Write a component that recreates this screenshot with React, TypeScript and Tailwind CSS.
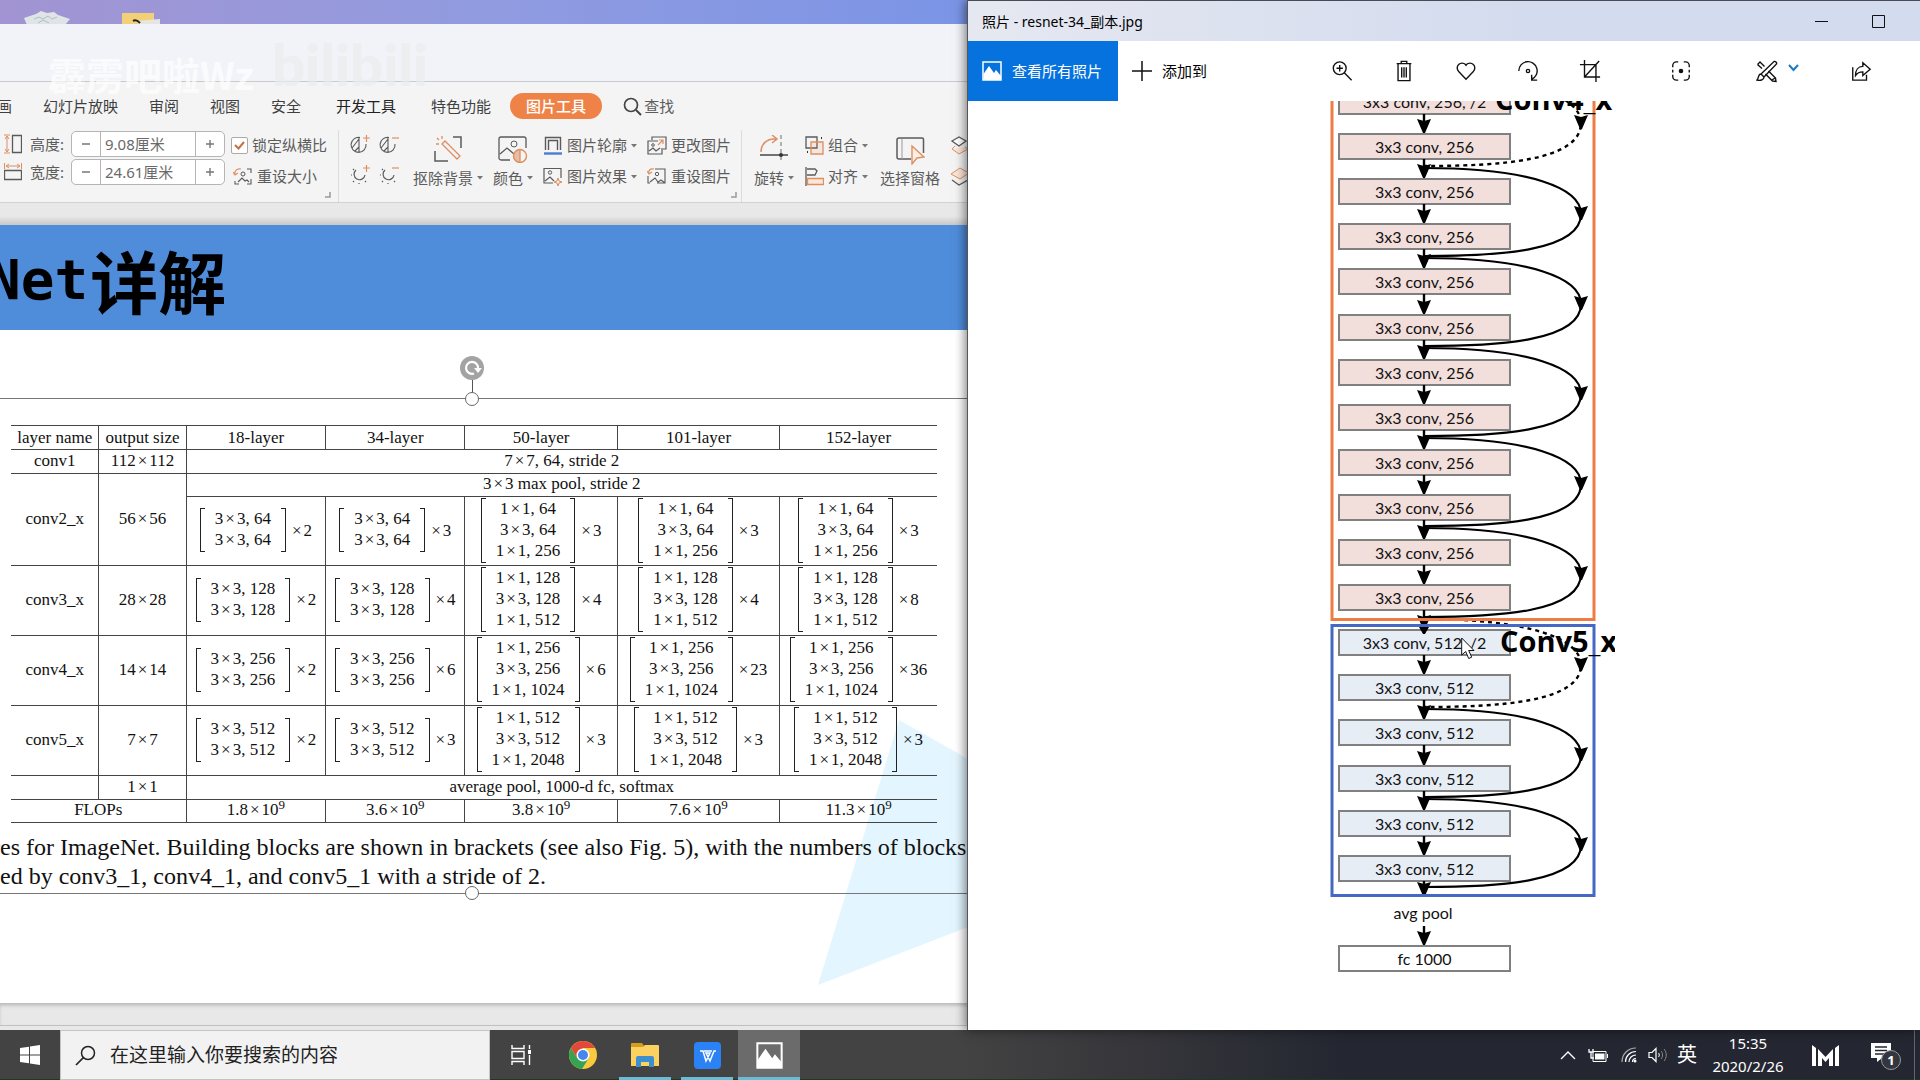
import React from "react";

const UI = "font-['Noto_Sans','Noto_Sans_CJK_SC',sans-serif]";

/* ---------- shared bits ---------- */

function Svg({ w, h, vb, className = "", children }: { w: number; h: number; vb?: string; className?: string; children: React.ReactNode }) {
  return (
    <svg width={w} height={h} viewBox={vb ?? `0 0 ${w} ${h}`} fill="none" className={`shrink-0 ${className}`} aria-hidden="true">
      {children}
    </svg>
  );
}

const Caret = () => (
  <Svg w={6} h={4} className="ml-1">
    <path d="M0 0h6L3 3.5z" fill="#777" />
  </Svg>
);

const DARK = "#5a5a5a";
const ORG = "#dd8f62";

/* ---------- presentation window ---------- */

function Stepper({ label, value, icon }: { label: string; value: string; icon: React.ReactNode }) {
  return (
    <div className="flex h-[26px] items-center">
      <span className="flex w-[18px] justify-center">{icon}</span>
      <label htmlFor={label} className="ml-2 w-[41px]">{label}:</label>
      <div className="flex h-[26px] w-[154px] overflow-hidden rounded-[5px] border border-[#b5b5b5] bg-white">
        <button aria-label={`减小${label}`} className="grid w-7 place-items-center">
          <Svg w={8} h={8}><path d="M0 4h8" stroke="#777" strokeWidth="1.4" /></Svg>
        </button>
        <input id={label} defaultValue={value} className="w-0 flex-1 border-x border-[#b5b5b5] px-1 text-[15px] text-[#6a6a6a] outline-none" />
        <button aria-label={`增大${label}`} className="grid w-7 place-items-center">
          <Svg w={8} h={8}><path d="M0 4h8M4 0v8" stroke="#777" strokeWidth="1.4" /></Svg>
        </button>
      </div>
    </div>
  );
}

function Small({ icon, text, caret }: { icon: React.ReactNode; text: string; caret?: boolean }) {
  return (
    <button className="flex h-[31px] items-center whitespace-nowrap">
      <span className="mr-1 flex w-5 justify-center">{icon}</span>
      {text}
      {caret && <Caret />}
    </button>
  );
}

function Big({ icon, text, caret, className = "" }: { icon: React.ReactNode; text: string; caret?: boolean; className?: string }) {
  return (
    <button className={`flex flex-col items-center whitespace-nowrap pt-1 ${className}`}>
      <span className="flex h-[30px] items-center">{icon}</span>
      <span className="flex h-[28px] items-center">
        {text}
        {caret && <Caret />}
      </span>
    </button>
  );
}

const Corner = () => (
  <Svg w={6} h={6} className="self-end"><path d="M5 0v5H0" stroke="#999" strokeWidth="1.5" /></Svg>
);

const Adjust = ({ round, plus }: { round?: boolean; plus?: boolean }) => (
  <button aria-label={`${round ? "亮度" : "对比度"}${plus ? "增加" : "减少"}`} className="grid h-[30px] w-[29px] place-items-center">
    <Svg w={20} h={20}>
      {round ? (
        <path d="M6 5a5.500 5.500 0 1 0 9 5M3 4l1 1M1 10h1M3 17l1-1M9 19v-1M15 16l1 1" stroke={DARK} strokeWidth="1.2" />
      ) : (
        <path d="M10 2.500a7.500 7.500 0 1 0 6 6.500M9 3v14.500M9 4l-7 9M9 12l-4 4" stroke={DARK} strokeWidth="1.1" />
      )}
      <path d={plus ? "M13 3h7M16.500 0v7" : "M13 3h7"} stroke={ORG} strokeWidth="1.2" />
    </Svg>
  </button>
);

const ResetPicture = () => (
  <Svg w={20} h={19}>
    <path d="M8 2h10v14h-8M1 9v7h2M3 15l5-4 3 4 3-2 4 3" stroke={DARK} strokeWidth="1.1" />
    <circle cx="10" cy="7" r="1.700" stroke={DARK} />
    <path d="M2 7C1 4 3 1 7 2M0 4l2 3 3-2" stroke={ORG} strokeWidth="1.2" />
  </Svg>
);

const ResetSize = () => (
  <Svg w={20} h={19}>
    <path d="M14 2h4v4M18 12v5h-4M6 17H2v-3M5 15l4-4 3 3 2-1 2 2" stroke={DARK} strokeWidth="1.1" />
    <circle cx="10" cy="7" r="2" stroke={DARK} />
    <path d="M2 8C1 4 4 1 8 2M0 5l2 3 3-2" stroke={ORG} strokeWidth="1.2" />
  </Svg>
);

function Ribbon() {
  return (
    <div className="flex shrink-0 flex-col overflow-hidden border-b border-[#d2d2d2] bg-[#f4f4f4] text-[15px] text-[#5c5c5c]">
      <nav className="flex h-12 items-center gap-[31px] whitespace-nowrap text-[#3f3f3f]">
        <button className="-ml-[3px]">画</button>
        <button>幻灯片放映</button>
        <button>审阅</button>
        <button>视图</button>
        <button>安全</button>
        <button className="px-1 text-[#222]">开发工具</button>
        <button>特色功能</button>
        <button className="-ml-3 h-[26px] rounded-full bg-[#ef8247] px-4 font-medium text-white">图片工具</button>
        <button className="-ml-2.5 flex items-center gap-0.5 text-[#5c5c5c]">
          <Svg w={19} h={19}><circle cx="8" cy="8" r="6.500" stroke="#444" strokeWidth="1.7" /><path d="M13 13l5 5" stroke="#444" strokeWidth="2" /></Svg>
          查找
        </button>
      </nav>
      <div className="flex h-[72px] whitespace-nowrap">
        <div className="flex w-[339px] shrink-0 border-r border-[#dcdcdc] pl-1">
          <div className="flex flex-col gap-0.5 pt-px">
            <Stepper label="高度" value="9.08厘米" icon={<Svg w={18} h={20}><path d="M8.500 1.500h9v17h-9z" stroke={DARK} strokeWidth="1.3" /><path d="M0 1h6M0 19h6M3 2v16M1 5l2-3 2 3M1 15l2 3 2-3" stroke={ORG} /></Svg>} />
            <Stepper label="宽度" value="24.61厘米" icon={<Svg w={18} h={18}><path d="M.5 7.500h17v9H.5z" stroke={DARK} strokeWidth="1.3" /><path d="M.5 0v6M17.500 0v6M2 3h14M5 1L2 3l3 2M13 1l3 2-3 2" stroke={ORG} /></Svg>} />
          </div>
          <div className="ml-1.5 flex flex-col">
            <label className="flex h-[31px] items-center gap-1">
              <span className="relative grid size-[17px] place-items-center">
                <input type="checkbox" defaultChecked className="peer size-[17px] appearance-none rounded-[2px] border border-[#b0a8a4] bg-white" />
                <Svg w={11} h={9} className="pointer-events-none absolute hidden peer-checked:block"><path d="M1 4l3.500 3.500L10 1" stroke="#c4703f" strokeWidth="2" /></Svg>
              </span>
              锁定纵横比
            </label>
            <span className="ml-0.5"><Small text="重设大小" icon={<ResetSize />} /></span>
          </div>
          <div className="-ml-0.5 flex pb-1"><Corner /></div>
        </div>
        <div className="grid shrink-0 grid-cols-2 content-start self-start pl-1.5">
          <Adjust plus /><Adjust /><Adjust round plus /><Adjust round />
        </div>
        <Big className="ml-2.5" text="抠除背景" caret icon={
          <Svg w={28} h={26}><path d="M19 1h8v11M1 15v10h13" stroke={DARK} strokeWidth="1.5" /><path d="M9 7l2-2 15 15-3 3L8 8zM2 8h3M3 2l2 2M8 0v3" stroke={ORG} strokeWidth="1.3" /></Svg>
        } />
        <Big className="ml-2.5" text="颜色" caret icon={
          <Svg w={30} h={27}><path d="M12 24H3a2 2 0 0 1-2-2V3a2 2 0 0 1 2-2h23a2 2 0 0 1 2 2v9M2 18l7-6 7 6" stroke={DARK} strokeWidth="1.3" /><circle cx="16" cy="8" r="3" stroke={DARK} /><circle cx="22" cy="20" r="6.500" stroke={ORG} strokeWidth="1.4" /><path d="M22 13.500a6.500 6.500 0 0 0 0 13z" fill={ORG} opacity=".55" /><path d="M22 13v14" stroke={ORG} strokeWidth="1.3" /></Svg>
        } />
        <div className="ml-2.5 flex flex-col">
          <Small text="图片轮廓" caret icon={<Svg w={18} h={19}><path d="M1.500 14V1.500h15V14M4.500 14V4.500h9V14" stroke={DARK} strokeWidth="1.4" /><path d="M0 17.500h18" stroke="#4a7fd0" strokeWidth="2.4" /></Svg>} />
          <Small text="图片效果" caret icon={<Svg w={20} h={19}><path d="M10 16H1V1.500h17V11M2 14l5-4 4 4" stroke={DARK} strokeWidth="1.2" /><circle cx="7" cy="5.500" r="1.700" stroke={DARK} /><path d="M15 11l1 3 3 1-3 1-1 3-1-3-3-1 3-1z" stroke={ORG} /></Svg>} />
        </div>
        <div className="ml-2.5 flex flex-col">
          <Small text="更改图片" icon={<Svg w={20} h={19}><path d="M5 4V1h14v12h-3M11 5H1v13h14v-6M2 15l4-3 3 3 4-3" stroke={DARK} strokeWidth="1.2" /><circle cx="6" cy="9" r="1.300" stroke={DARK} /><path d="M11 9l5-5M12 4h4v4" stroke={ORG} strokeWidth="1.2" /></Svg>} />
          <Small text="重设图片" icon={<ResetPicture />} />
        </div>
        <div className="flex shrink-0 border-r border-[#dcdcdc] pb-1 pr-1"><Corner /></div>
        <Big className="ml-3" text="旋转" caret icon={
          <Svg w={28} h={28}><path d="M0 20h28" stroke={DARK} strokeWidth="1.7" /><path d="M21 0v28" stroke="#999" strokeWidth="1.5" strokeDasharray="4 3" /><circle cx="21" cy="20" r="2" fill="#333" /><path d="M1 17C1 9 7 3 16 4M12 0l5 4-5 4" stroke={ORG} strokeWidth="1.5" /></Svg>
        } />
        <div className="ml-2.5 flex flex-col">
          <Small text="组合" caret icon={<Svg w={19} h={19}><path d="M1 1h11v11H1z" stroke={DARK} strokeWidth="1.3" /><path d="M6 6h12v12H6z" stroke={ORG} strokeWidth="1.3" fill="#ef8247" fillOpacity=".12" /><path d="M16 2h1M2 16h1" stroke="#333" strokeWidth="2" /></Svg>} />
          <Small text="对齐" caret icon={<Svg w={19} h={19}><path d="M1 0v19M2 2h8l2 2-2 4H2" stroke={DARK} strokeWidth="1.3" /><path d="M2.500 11.500h16v6h-16z" stroke={ORG} strokeWidth="1.3" fill="#fbe6d8" /></Svg>} />
        </div>
        <Big className="ml-3" text="选择窗格" icon={
          <Svg w={29} h={28} className="mt-1"><path d="M15 22H3a2 2 0 0 1-2-2V3a2 2 0 0 1 2-2h23a1.500 1.500 0 0 1 1.500 1.500V16" stroke={DARK} strokeWidth="1.5" /><path d="M6 2v20" stroke="#999" /><path d="M16 9l12 11-7 1-5 6z" stroke={ORG} strokeWidth="1.4" fill="#fdeee4" /></Svg>
        } />
        <div className="ml-2.5 flex flex-col">
          <Small text="" icon={<Svg w={20} h={19}><path d="M2 13l7 5 9-5-3-2M2 13l3-3" stroke={ORG} fill="#fbe6d8" /><path d="M2 5l7-4 7 4-7 5z" stroke={DARK} strokeWidth="1.3" fill="#fff" /></Svg>} />
          <Small text="" icon={<Svg w={20} h={19}><path d="M2 13l7 5 9-5" stroke={DARK} strokeWidth="1.3" /><path d="M1 7l9-6 9 5-9 6z" stroke={ORG} fill="#fbe6d8" /></Svg>} />
        </div>
      </div>
    </div>
  );
}

/* Text with breathing room round each multiplication sign. */
function T({ s }: { s: string }) {
  return (
    <>
      {s.split("×").map((part, i) => (
        <React.Fragment key={i}>
          {i > 0 && <span className="px-0.5">×</span>}
          {part}
        </React.Fragment>
      ))}
    </>
  );
}

function Matrix({ rows, times }: { rows: string[]; times: number }) {
  return (
    <div className="flex items-center justify-center leading-[21px]">
      <div className="w-[5px] self-stretch border-y border-l border-[#222]" />
      <div className="px-2.5 pb-0.5 text-center">
        {rows.map((r, i) => <div key={i}><T s={r} /></div>)}
      </div>
      <div className="w-[5px] self-stretch border-y border-r border-[#222]" />
      <span className="ml-1"><T s={`×${times}`} /></span>
    </div>
  );
}

const BLOCKS = [
  { name: "conv2_x", size: "56×56", c: 64, out: 256, n: [2, 3, 3, 3, 3] },
  { name: "conv3_x", size: "28×28", c: 128, out: 512, n: [2, 4, 4, 4, 8] },
  { name: "conv4_x", size: "14×14", c: 256, out: 1024, n: [2, 6, 6, 23, 36] },
  { name: "conv5_x", size: "7×7", c: 512, out: 2048, n: [2, 3, 3, 3, 3] },
];

function blockCells(b: (typeof BLOCKS)[number]) {
  return b.n.map((n, i) => (
    <td key={i}>
      <Matrix rows={i < 2 ? [`3×3, ${b.c}`, `3×3, ${b.c}`] : [`1×1, ${b.c}`, `3×3, ${b.c}`, `1×1, ${b.out}`]} times={n} />
    </td>
  ));
}

function LayerTable() {
  return (
    <table className="w-full table-fixed border-collapse whitespace-nowrap text-center font-['Liberation_Serif',serif] text-[17px] leading-5 text-[#111] [&_td]:border [&_td]:border-[#444] [&_td]:px-0 [&_td]:pt-0 [&_td]:pb-0.5 [&_th]:border [&_th]:border-[#444] [&_th]:p-0 [&_th]:font-normal [&_tr>*:first-child]:border-l-0 [&_tr>*:last-child]:border-r-0">
      <colgroup>
        <col className="w-[9.5%]" /><col className="w-[9.4%]" /><col className="w-[15.1%]" /><col className="w-[15%]" />
        <col className="w-[16.5%]" /><col className="w-[17.5%]" /><col className="w-[17%]" />
      </colgroup>
      <thead>
        <tr className="h-6">
          {["layer name", "output size", "18-layer", "34-layer", "50-layer", "101-layer", "152-layer"].map((h) => <th key={h}>{h}</th>)}
        </tr>
      </thead>
      <tbody>
        <tr className="h-6"><td>conv1</td><td><T s="112×112" /></td><td colSpan={5}><T s="7×7, 64, stride 2" /></td></tr>
        <tr className="h-[23px]">
          <td rowSpan={2}>{BLOCKS[0].name}</td>
          <td rowSpan={2}><T s={BLOCKS[0].size} /></td>
          <td colSpan={5}><T s="3×3 max pool, stride 2" /></td>
        </tr>
        <tr className="h-[69px] [&>td:first-child]:border-l!">{blockCells(BLOCKS[0])}</tr>
        {BLOCKS.slice(1).map((b) => (
          <tr key={b.name} className="h-[70px]">
            <td>{b.name}</td>
            <td><T s={b.size} /></td>
            {blockCells(b)}
          </tr>
        ))}
        <tr className="h-6"><td /><td><T s="1×1" /></td><td colSpan={5}>average pool, 1000-d fc, softmax</td></tr>
        <tr className="h-[23px]">
          <td colSpan={2}>FLOPs</td>
          {["1.8", "3.6", "3.8", "7.6", "11.3"].map((v) => (
            <td key={v}><T s={`${v}×10`} /><sup className="top-[-6px] text-[13px]">9</sup></td>
          ))}
        </tr>
      </tbody>
    </table>
  );
}

const Knob = ({ className }: { className: string }) => (
  <span className={`absolute left-[465px] size-[14px] rounded-full border border-[#666] bg-white ${className}`} />
);

function Slides() {
  return (
    <section className="relative flex min-w-0 flex-col overflow-hidden">
      <div className="relative h-6 shrink-0 overflow-hidden bg-linear-to-r from-[#a294d2] via-[#919be0] to-[#7b94e6]">
        <Svg w={46} h={15} className="absolute left-6 top-[10px]"><path d="M0 8L12 4 17 1 23 3 30 2 34 5 46 9 41 15H3z" fill="#dfe5e6" /><path d="M10 9l5-2 4 2 5-3 4 3 5-2M14 13l5-3 6 3" stroke="#b4bdc0" /></Svg>
        <Svg w={38} h={11} className="absolute left-[122px] top-[13px]"><path d="M0 0h32v11H0z" fill="#f3cf77" /><path d="M14 8l24-2v5H16z" fill="#e6e6e0" /><path d="M11 8c3-2 5 0 7 2" stroke="#222" strokeWidth="2" /></Svg>
      </div>
      <div className="relative h-[58px] shrink-0 border-b border-[#c6cbd0] bg-[#f1f3f8]" />
      <Ribbon />
      <div className="h-[22px] shrink-0 bg-linear-to-b from-[#e8e8e8] from-60% to-[#c8c8c8]" />
      <div className="relative flex min-h-0 flex-1 flex-col bg-white">
        <h1 className="-ml-[13px] flex h-[105px] shrink-0 items-center whitespace-nowrap bg-[#4f8ddb] pt-1 text-black">
          <span className="font-['DejaVu_Sans_Mono',monospace] text-[56px] font-bold leading-none">Net</span>
          <span className="ml-0.5 font-['Noto_Sans_CJK_SC',sans-serif] text-[68px] font-bold leading-none">详解</span>
        </h1>
        <Svg w={150} h={265} className="absolute right-0 top-[495px]"><path d="M81 0l69 39v168L0 265z" fill="#e3f5fe" /></Svg>
        <div className="relative mt-[68px] border-y border-[#777] pt-[26px]">
          <Knob className="-top-[7px]" />
          <Knob className="-bottom-[7px]" />
          <span className="absolute -top-5 left-[472px] h-[13px] w-px bg-[#555]" />
          <Svg w={24} h={24} className="absolute -top-[43px] left-[460px]">
            <circle cx="12" cy="12" r="12" fill="#a3a3a3" />
            <path d="M14 17.500a6 6 0 1 1 4-5" stroke="#fff" strokeWidth="2.200" />
            <path d="M14 12h8l-4 5z" fill="#fff" />
          </Svg>
          <div className="ml-[11px] mr-[31px]"><LayerTable /></div>
          <p className="-ml-2 mt-2.5 whitespace-nowrap pb-0.5 font-['Liberation_Serif',serif] text-[24px] leading-[29px] text-[#111]">
            res for ImageNet. Building blocks are shown in brackets (see also Fig. 5), with the numbers of blocks
            <br />
            <span className="ml-2">ed by conv3_1, conv4_1, and conv5_1 with a stride of 2.</span>
          </p>
        </div>
      </div>
      <div className="h-[23px] shrink-0 border-y border-[#c0c0c0] bg-[#e8e8e8] shadow-[inset_0_2px_3px_#c4c4c4]" />
      <div className="h-1 shrink-0 bg-[#e8e8e8]" />
      <span className="pointer-events-none absolute left-12 top-[46px] whitespace-nowrap font-['Noto_Sans_CJK_SC',sans-serif] text-[38px] font-bold leading-[56px] text-white/70">霹雳吧啦Wz</span>
      <span className="pointer-events-none absolute left-[272px] top-[30px] font-['Lato',sans-serif] text-[58px] font-black leading-[68px] text-[#e9ebec]/70">bilibili</span>
    </section>
  );
}

/* ---------- network diagram ---------- */

const MID = 151;
const PASS = 308;
const rowY = (i: number) => Math.round(i * 45.1);
const gapY = (i: number) => rowY(i + 0.5);

const CONVS = [
  "3x3 conv, 256, /2",
  ...Array<string>(11).fill("3x3 conv, 256"),
  "3x3 conv, 512, /2",
  ...Array<string>(5).fill("3x3 conv, 512"),
];

const Head = ({ x, y }: { x: number; y: number }) => <path d={`M${x - 7} ${y - 14}l7 2 7-2-6 14h-2z`} fill="#000" />;

function Shortcut({ from, dashed }: { from: number; dashed?: boolean }) {
  const a = gapY(from) - 1;
  const b = gapY(from + 2) - 3;
  return (
    <g>
      <path
        d={`M${MID} ${a}C${MID + 106} ${a} ${PASS} ${a + 20} ${PASS} ${a + 46}C${PASS} ${b - 5} ${MID + 76} ${b} ${MID} ${b}`}
        stroke="#000"
        strokeWidth={dashed ? 2.4 : 2.2}
        strokeDasharray={dashed ? "4 4" : undefined}
      />
      <Head x={PASS} y={a + 52} />
    </g>
  );
}

function Network() {
  return (
    <div className="relative h-[880px] w-[342px] shrink-0 overflow-hidden font-['Lato','Noto_Sans',sans-serif] text-[16px] text-[#111]">
      {CONVS.map((name, i) => (
        <div
          key={i}
          className={`absolute left-[65px] -mt-[13px] grid h-[27px] w-[173px] place-items-center border-2 border-[#808080] pb-0.5 ${i < 12 ? "bg-[#f2dedb]" : "bg-[#e7edf5]"}`}
          style={{ top: rowY(i) }}
        >
          {name}
        </div>
      ))}
      <div className="absolute left-[65px] -mt-[14px] grid h-[27px] w-[170px] place-items-center" style={{ top: rowY(18) }}>avg pool</div>
      <div className="absolute left-[65px] -mt-[13px] grid h-[27px] w-[173px] place-items-center border-2 border-[#808080] bg-white pb-0.5" style={{ top: rowY(19) }}>fc 1000</div>
      <Svg w={342} h={880} className="absolute left-0 top-0">
        {Array.from({ length: 19 }, (_, i) => (
          <g key={i}>
            <path d={`M${MID} ${rowY(i) + 13}V${rowY(i + 1) - 16}`} stroke="#000" strokeWidth="2.400" />
            <Head x={MID} y={rowY(i + 1) - (i === 17 ? 17 : 13)} />
          </g>
        ))}
        <Shortcut from={-1} dashed />
        {[1, 3, 5, 7, 9].map((i) => <Shortcut key={i} from={i} />)}
        <Shortcut from={11} dashed />
        {[13, 15].map((i) => <Shortcut key={i} from={i} />)}
        <path d="M59 -10V518.500H321V-10" stroke="#ed7d45" strokeWidth="3" />
        <path d="M59 524.500H321V794.500H59z" stroke="#4468c4" strokeWidth="3" />
        <path d="M146 526h10l-4 7h-2z" fill="#000" />
      </Svg>
      <span className="absolute left-[222px] -top-[22px] whitespace-nowrap font-['Open_Sans',sans-serif] text-[29px] font-bold leading-10 text-black">Conv4<span className="font-light">_</span>x</span>
      <span className="absolute left-[227px] top-[520px] whitespace-nowrap font-['Open_Sans',sans-serif] text-[29px] font-bold leading-10 text-black">Conv5<span className="font-light">_</span>x</span>
    </div>
  );
}

/* ---------- photo viewer window ---------- */

function Tool({ label, className = "", children }: { label: string; className?: string; children: React.ReactNode }) {
  return (
    <button aria-label={label} className={`grid h-full w-[62px] shrink-0 place-items-center ${className}`}>
      <Svg w={22} h={24} vb="-1 -1 24 26"><g stroke="#111" strokeWidth="1.5">{children}</g></Svg>
    </button>
  );
}

const Photo = ({ w, h }: { w: number; h: number }) => (
  <Svg w={w} h={h} vb="0 0 20 20">
    <path d="M1 1h18v18H1z" stroke="#fff" strokeWidth="1.5" />
    <path d="M1.500 19v-6L7 5l5 7 2-3 5 6v4z" fill="#fff" />
  </Svg>
);

function Photos() {
  return (
    <section className="relative z-10 flex min-w-0 flex-col overflow-hidden border-t border-[#4a4a55] bg-white text-[15px] text-black shadow-[-1px_0_0_#55555e,-3px_0_10px_rgba(0,0,0,.5)]">
      <header className="flex h-10 shrink-0 items-center bg-linear-to-r from-[#e6e8f1] to-[#d3dbee] to-60% pl-3.5 text-[14px]">
        <span>照片 - resnet-34_副本.jpg</span>
        <button aria-label="最小化" className="ml-auto grid h-full w-[57px] place-items-center"><Svg w={13} h={13}><path d="M0 6.500h13" stroke="#111" /></Svg></button>
        <button aria-label="最大化" className="mr-[13px] grid h-full w-[57px] place-items-center"><Svg w={13} h={13}><path d="M.5.5h12v12H.5z" stroke="#111" /></Svg></button>
      </header>
      <div className="flex h-[60px] shrink-0 items-center whitespace-nowrap">
        <button className="flex h-full w-[150px] items-center gap-2.5 bg-[#0672de] pl-3.5 text-white"><Photo w={20} h={20} />查看所有照片</button>
        <button className="flex h-full items-center gap-2.5 pl-3.5"><Svg w={20} h={20}><path d="M0 10h20M10 0v20" stroke="#111" strokeWidth="1.5" /></Svg>添加到</button>
        <Tool label="放大" className="ml-auto"><circle cx="8.500" cy="9" r="7" /><path d="M13.500 14l8 8M5 9h7M8.500 5.500v7" /></Tool>
        <Tool label="删除"><path d="M3 4h16M8 4V1.500h6V4M4.500 4v18.500h13V4M8.500 8v11M11 8v11M13.500 8v11" /></Tool>
        <Tool label="收藏"><path d="M11 21L3 12.500a5.200 5.200 0 0 1 0-7.500 5.200 5.200 0 0 1 7.500 0l.5.700.500-.700a5.200 5.200 0 0 1 7.500 0 5.200 5.200 0 0 1 0 7.500z" /></Tool>
        <Tool label="旋转"><path d="M1 12A10 10 0 1 1 15 21M15 16v6h6" /><circle cx="11" cy="12" r="1.800" /></Tool>
        <Tool label="裁剪"><path d="M0 5h17.500v19M5 0v18.500h17M5.500 18L21 1" /></Tool>
        <Tool label="识别" className="ml-[29px]"><path d="M2 8V6a4 4 0 0 1 4-4h2M14 2h2a4 4 0 0 1 4 4v2M20 16v2a4 4 0 0 1-4 4h-2M8 22H6a4 4 0 0 1-4-4v-2M2 10.500v3M20 10.500v3" /><circle cx="11" cy="12" r="2.500" fill="#111" stroke="none" /></Tool>
        <button aria-label="编辑和创建" className="ml-8 flex h-full w-[62px] shrink-0 items-center gap-2.5 pl-3">
          <Svg w={22} h={24}><g stroke="#111" strokeWidth="1.4"><path d="M1.500 5.500L4 3l4.500 4.500M12.500 12l7 7 .5 3.500-3.500-.5-7-7M6 9.500L1.500 5.500M16 21l3-2" /><path d="M18 2.500a2 2 0 0 1 2.500 2.500L8 18l-3-3zM5 15c-3 0-2 4-4 6 3 1 7 0 7-3" /></g></Svg>
          <Svg w={11} h={8} className="mb-1.5"><path d="M1 1l4.500 5L10 1" stroke="#1a7ac4" strokeWidth="2" /></Svg>
        </button>
        <Tool label="共享" className="ml-6 mr-7"><path d="M2 8v14h15v-6M13 3l8 7-8 7v-4c-4 0-6 1-8 4 0-6 3-10 8-10z" /></Tool>
      </div>
      <div className="flex min-h-0 flex-1 justify-center overflow-hidden"><Network /></div>
    </section>
  );
}

/* ---------- taskbar ---------- */

function TaskButton({ label, running, active, children }: { label: string; running?: boolean; active?: boolean; children: React.ReactNode }) {
  return (
    <button aria-label={label} className={`relative grid h-full w-[62px] place-items-center ${active ? "bg-[#6b6b6b]" : ""}`}>
      {children}
      {running && <span className={`absolute bottom-0 h-[3px] bg-[#6bbcd6] ${active ? "inset-x-0" : "inset-x-[5px]"}`} />}
    </button>
  );
}

function Taskbar() {
  return (
    <footer className="flex h-[50px] shrink-0 items-center bg-linear-to-r from-[#434343] from-50% via-[#35353a] via-60% to-[#242731] to-70% text-white shadow-[inset_0_-1px_0_#1d3a1d]">
      <button aria-label="开始" className="grid h-full w-[60px] place-items-center">
        <Svg w={20} h={20}><path d="M0 3l9-1.300V9.500H0zM10 1.500L20 0v9.500H10zM0 10.500h9v7.800L0 17zM10 10.500h10V20l-10-1.500z" fill="#fff" /></Svg>
      </button>
      <div className="flex h-full w-[430px] items-center border border-[#c4c4c4] bg-[#f2f2f2] pl-3.5 text-[#222]">
        <Svg w={21} h={21}><circle cx="13" cy="8" r="6.500" stroke="#222" strokeWidth="1.5" /><path d="M8.500 12.500L1 20" stroke="#222" strokeWidth="1.700" /></Svg>
        <input aria-label="搜索" placeholder="在这里输入你要搜索的内容" className="ml-3.5 min-w-0 flex-1 bg-transparent text-[19px] outline-none placeholder:text-[#222]" />
      </div>
      <TaskButton label="任务视图">
        <Svg w={21} h={20}><path d="M1 0v3.500h12V0M1 20v-3.500h12V20M1 6.500h12v7H1zM18.500 0v4M18.500 10v10" stroke="#fff" strokeWidth="1.400" /><path d="M17 5h3v4h-3z" fill="#fff" /></Svg>
      </TaskButton>
      <TaskButton label="Chrome">
        <Svg w={28} h={28}>
          <circle cx="14" cy="14" r="14" fill="#fbc93d" />
          <path d="M14 7h12.100A14 14 0 0 0 1.900 7L8 17z" fill="#e2493a" />
          <path d="M1.900 7A14 14 0 0 0 13 28l6.500-10.500L14 20 8 17z" fill="#35a352" />
          <circle cx="14" cy="14" r="6.500" fill="#fff" /><circle cx="14" cy="14" r="5" fill="#4587ee" />
        </Svg>
      </TaskButton>
      <TaskButton label="文件资源管理器" running>
        <Svg w={28} h={25}><path d="M0 1a1 1 0 0 1 1-1h10l3 4H0z" fill="#d99b1b" /><path d="M0 4h12l2-2h13a1 1 0 0 1 1 1v20H0z" fill="#fbd25f" /><path d="M5 24v-9a2 2 0 0 1 2-2h14a2 2 0 0 1 2 2v9h-5v-5h-8v5z" fill="#3e8fd0" /></Svg>
      </TaskButton>
      <TaskButton label="WPS" running>
        <Svg w={27} h={27}><rect width="27" height="27" rx="4" fill="#2a82f5" /><path d="M6 9h3l3 10 4-8h-4l4 8 4-10h2M10 9h8" stroke="#fff" strokeWidth="1.500" /></Svg>
      </TaskButton>
      <TaskButton label="照片" running active><Photo w={27} h={27} /></TaskButton>

      <div className="ml-auto flex h-full items-center">
        <button aria-label="显示隐藏的图标" className="grid w-[30px] place-items-center"><Svg w={16} h={9}><path d="M1 8l7-7 7 7" stroke="#fff" strokeWidth="1.400" /></Svg></button>
        <button aria-label="电池" className="grid w-[30px] place-items-center"><Svg w={20} h={13}><path d="M5 2.500h13v10H5zM19.500 5v4" stroke="#fff" /><path d="M7 4.500h9.500v6H7z" fill="#fff" /><path d="M1 0v3h4V0M3 3v6h3" stroke="#fff" strokeWidth="1.300" /></Svg></button>
        <button aria-label="网络" className="grid w-[31px] place-items-center"><Svg w={16} h={16}><g stroke="#fff" strokeWidth="1.200"><path d="M1 15C1 7 7 1 15 1" opacity=".6" /><path d="M4.500 15C4.500 9 9 4.500 15 4.500M8 15c0-4 3-7 7-7M11.500 15c0-2 1.500-3.500 3.500-3.500" /></g><circle cx="14" cy="14" r="1.500" fill="#fff" /></Svg></button>
        <button aria-label="音量" className="grid w-[28px] place-items-center"><Svg w={21} h={16}><path d="M1 5.500h3l4-4v13l-4-4H1z" stroke="#fff" strokeWidth="1.200" /><path d="M10.500 6c1 1 1 3 0 4" stroke="#fff" /><path d="M13 4c2 2 2 6 0 8M16 2c3 3 3 9 0 12" stroke="#888" /></Svg></button>
        <button className="w-[30px] text-center text-[20px]">英</button>
        <div className="w-[92px] text-center text-[15px] leading-[23px]"><div>15:35</div><div>2020/2/26</div></div>
        <button aria-label="电脑管家" className="grid w-[62px] place-items-center"><Svg w={27} h={21}><path d="M0 0l4 3v18H0zM27 0l-4 3v18h4zM6 21V4l7.500 8L21 4v17h-4v-8l-3.500 4-3.500-4v8z" fill="#fff" /></Svg></button>
        <button aria-label="通知" className="relative grid w-[50px] place-items-center">
          <Svg w={20} h={20} className="mb-1"><path d="M0 0h20v15h-9l-5 4v-4H0z" fill="#fff" /><path d="M4 4h12M4 7.500h12M4 11h9" stroke="#242731" strokeWidth="1.500" /></Svg>
          <span className="absolute left-[25px] top-[7px] grid size-5 place-items-center rounded-full border border-[#999] bg-[#333640] text-[13px] font-bold leading-none">1</span>
        </button>
        <span className="ml-2 mr-[5px] h-full w-px bg-[#666]" />
      </div>
    </footer>
  );
}

export default function App() {
  return (
    <div className={`relative flex h-screen flex-col overflow-hidden bg-white ${UI}`}>
      <main className="grid min-h-0 flex-1 grid-cols-[121fr_119fr] grid-rows-[minmax(0,1fr)]">
        <Slides />
        <Photos />
      </main>
      <Taskbar />
      <Svg w={14} h={22} className="pointer-events-none absolute left-[1461px] top-[637px] z-20">
        <path d="M.7 1v17l4-3.500 3 7 3-1.300-3-6.700h5.300z" fill="#fff" stroke="#111" />
      </Svg>
    </div>
  );
}
